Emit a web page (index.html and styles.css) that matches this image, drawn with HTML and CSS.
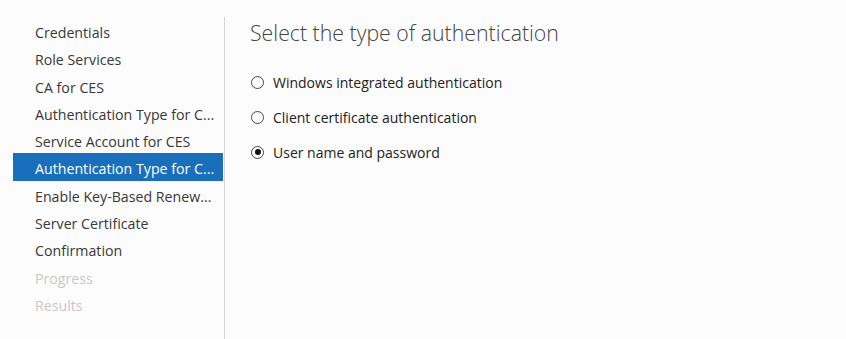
FILE: index.html
```html
<!DOCTYPE html>
<html lang="en">
<head>
    <meta charset="UTF-8">
    <title>Add Roles and Features Wizard</title>
    <link rel="stylesheet" href="styles.css">
</head>
<body>
    <div class="wizard">
        <ul class="steps">
            <li class="step">Credentials</li>
            <li class="step">Role Services</li>
            <li class="step">CA for CES</li>
            <li class="step" title="Authentication Type for CES">Authentication Type for C...</li>
            <li class="step">Service Account for CES</li>
            <li class="step active" title="Authentication Type for CEP">Authentication Type for C...</li>
            <li class="step" title="Enable Key-Based Renewal">Enable Key-Based Renew...</li>
            <li class="step">Server Certificate</li>
            <li class="step">Confirmation</li>
            <li class="step disabled">Progress</li>
            <li class="step disabled">Results</li>
        </ul>

        <div class="content">
            <h1 class="title">Select the type of authentication</h1>

            <div class="options">
                <label class="option"><span class="radio"></span>Windows integrated authentication</label>
                <label class="option"><span class="radio"></span>Client certificate authentication</label>
                <label class="option"><span class="radio checked"></span>User name and password</label>
            </div>
        </div>
    </div>
</body>
</html>
```

FILE: styles.css
```css
body {
    margin: 0;
    background: #fcfcfc;
    font-family: 'Open Sans', 'Noto Sans', sans-serif;
    color: #333;
}

.wizard {
    display: flex;
    height: 339px;
    padding-top: 17px;
    box-sizing: border-box;
}

.steps {
    list-style: none;
    margin: 0 0 0 13px;
    padding: 0;
    width: 210px;
}

.step {
    height: 27.3px;
    line-height: 27.3px;
    padding: 2px 0 0 22px;
    box-sizing: border-box;
    font-size: 14.2px;
    color: #383838;
    white-space: nowrap;
}

.step.active {
    background: #1a6fbc;
    color: #fff;
}

.step.disabled {
    color: #c9c9c9;
}

.content {
    flex: 1;
    margin-left: 1px;
    border-left: 1px solid #d6d6d6;
    padding-left: 25px;
}

.title {
    margin: 2px 0 0;
    font-size: 21.3px;
    font-weight: 300;
    color: #444;
    line-height: 28px;
}

.options {
    margin-top: 23px;
    display: flex;
    flex-direction: column;
    gap: 11px;
}

.option {
    display: flex;
    align-items: center;
    height: 24px;
    font-size: 14px;
    color: #222;
}

.radio {
    width: 11px;
    height: 11px;
    border: 1px solid #444;
    border-radius: 50%;
    margin: 0 9px 0 1px;
    position: relative;
    background: #fff;
}

.radio.checked::after {
    content: "";
    position: absolute;
    left: 2.5px;
    top: 2.5px;
    width: 6px;
    height: 6px;
    border-radius: 50%;
    background: #111;
}
```
